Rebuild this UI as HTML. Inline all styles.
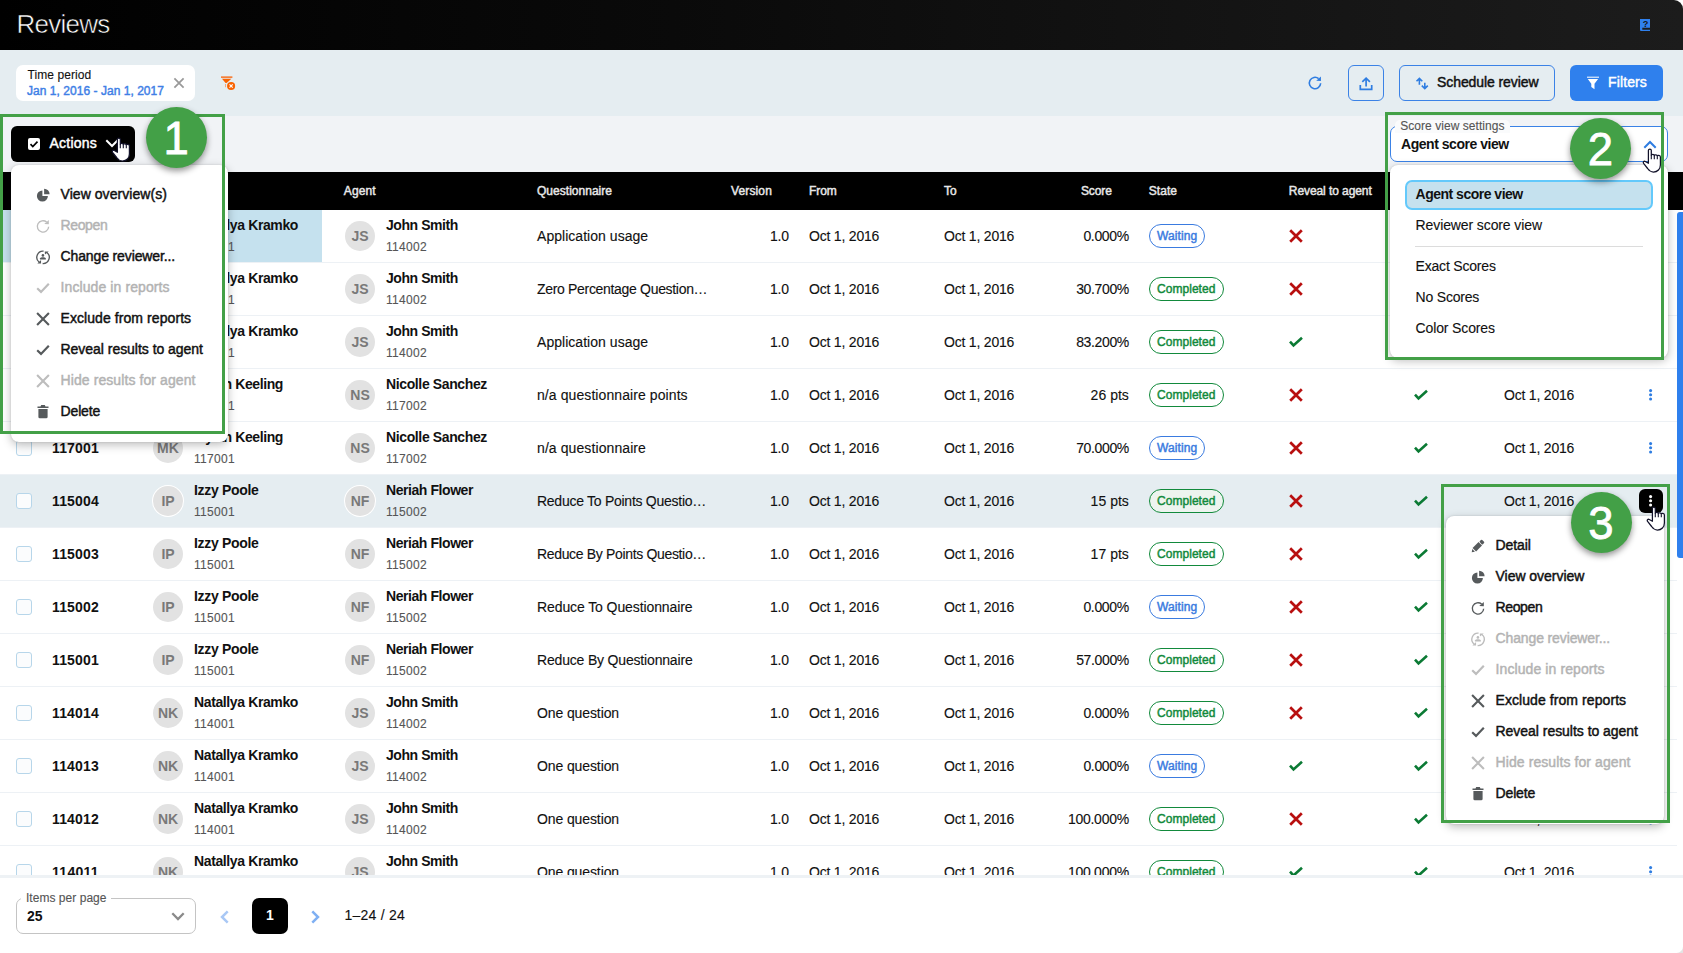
<!DOCTYPE html>
<html lang="en"><head><meta charset="utf-8"><title>Reviews</title>
<style>
*{box-sizing:border-box}
html,body{margin:0;padding:0}
body{width:1683px;height:953px;position:relative;overflow:hidden;background:#fff;font-family:"Liberation Sans",sans-serif;font-size:14px;color:#111}
.abs,.t,.header,.fbar,.tbar,.thead,.tbody,.foot,.row,.row>div,.row>span{position:absolute}
.t{white-space:nowrap;color:#111}
.t.m{-webkit-text-stroke:0.450px currentColor}
.t.r{-webkit-text-stroke:0.120px currentColor}
.header{left:0;top:0;width:1683px;height:50px;background:linear-gradient(90deg,#000 0%,#0a0a0a 40%,#1c1c1c 100%);border-top-right-radius:9px}
.fbar{left:0;top:50px;width:1683px;height:66px;background:#e5edf1}
.tbar{left:0;top:116px;width:1683px;height:56px;background:#f1f3f6}
.thead{left:0;top:172px;width:1683px;height:38px;background:#000}
.tbody{left:0;top:210px;width:1683px;height:665px;overflow:hidden;background:#fff}
.row{left:0;width:1677px;height:53px;border-bottom:1px solid #edf1f5}
.row.hov{background:#e5edf1}
.selcell{left:0;top:0;width:322px;height:52px;background:#c5e1ee}
.cb{left:16px;top:18px;width:16px;height:16px;border:1px solid #b7d6ea;border-radius:3px;background:#fbfcfd}
.av{top:11px;width:30px;height:30px;border-radius:50%;background:#e2e2e2;color:#797979;font-weight:bold;font-size:14px;text-align:center;line-height:30px;letter-spacing:0}
.row.hov .av{box-shadow:0 0 0 1px #fff}
.st{left:1149px;top:14px;height:24px;border:1px solid;border-radius:12px}
.st.w{border-color:#3a7be0;background:#fff}
.st.c{border-color:#128a3c;background:#fff}
.row.hov .st.c{background:#edf4ef}
.dotbtn{left:1639px;top:14px;width:24px;height:24px;background:#000;border-radius:6px}
.foot{left:0;top:875px;width:1683px;height:78px;background:#fff;border-top:3px solid #eef2f5}
.menu{position:absolute;background:#fff;border-radius:8px;box-shadow:0 3px 10px rgba(0,0,0,.26),0 0 2px rgba(0,0,0,.14)}
.grect{position:absolute;border:3px solid #43a047}
.gcirc{position:absolute;width:61px;height:61px;border-radius:50%;background:#43a047;color:#fff;font-size:45.500px;line-height:63px;text-align:center;box-shadow:0 3px 6px rgba(0,0,0,.42);-webkit-text-stroke:0.800px #fff}
.btn{position:absolute;height:36px;border-radius:6px;top:15px}
</style></head><body>
<div class="header"><span class="t r" style="left:16.5px;top:9px;font-size:26px;line-height:30px;letter-spacing:-0.75px;color:#fff;-webkit-text-stroke:0.550px #020202;">Reviews</span>
<svg class="abs" style="left:1639.800px;top:18.900px;width:10.500px;height:12.300px" viewBox="0 0 10.500 12.300"><path d="M0 0h10.500v8.800H2.300v1.900h8.200v1.600H1.800A1.800 1.800 0 0 1 0 10.500z" fill="#2f80ed"/><text x="5.600" y="7.800" font-size="9.200" font-weight="bold" text-anchor="middle" fill="#15171a" font-family="Liberation Sans, sans-serif">?</text></svg>
</div>
<div class="fbar">
 <div class="abs" style="left:16px;top:15px;width:179px;height:36px;background:#fff;border-radius:7px"></div>
 <span class="t r" style="left:27.5px;top:17px;font-size:12px;line-height:16px;letter-spacing:0.071px;">Time period</span>
 <span class="t m" style="left:27px;top:33px;font-size:12px;line-height:16px;letter-spacing:0.036px;color:#3f7fe6;">Jan 1, 2016 - Jan 1, 2017</span>
 <svg class="abs" style="left:178.90px;top:33.00px;width:1px;height:1px;overflow:visible"><path d="M-4.600 -4.600L4.600 4.600M4.600 -4.600L-4.600 4.600" stroke="#999" stroke-width="1.750" fill="none"/></svg>
 <svg class="abs" style="left:0.00px;top:0.00px;width:1px;height:1px;overflow:visible"><path d="M221 26.300H232.400V28H221z" fill="#f5803a"/><path d="M222 28.850H231.400L226.600 32.900H225.600z" fill="#f96302"/><path d="M225 34H225.900V37.200H225z" fill="#f9a06a"/><circle cx="231.100" cy="35.950" r="4.050" fill="#f96302"/><path d="M229.500 34.350L232.700 37.550M232.700 34.350L229.500 37.550" stroke="#fff" stroke-width="1.150" fill="none"/></svg>
 <svg class="abs" style="left:1315.00px;top:33.00px;width:1px;height:1px;overflow:visible"><path d="M5.660 0.300A5.670 5.670 0 1 1 3.640 -4.340" fill="none" stroke="#2f7de1" stroke-width="1.600"/><path fill="#2f7de1" d="M5.950 -6.450V-1.950L1.200 -2.300z"/></svg>
 <div class="btn" style="left:1348px;width:36px;border:1px solid #3b82e6"><svg class="abs" style="left:-1349.00px;top:-65.00px;width:1px;height:1px;overflow:visible"><path d="M1366.100 85.400V77.300M1362.300 80.900L1366.100 77.100L1369.900 80.900M1360.300 84.100V88.300H1371.700V84.100" fill="none" stroke="#2f7de1" stroke-width="1.700"/></svg></div>
 <div class="btn" style="left:1399px;width:156px;border:1px solid #3b82e6"><svg class="abs" style="left:-1400.00px;top:-65.00px;width:1px;height:1px;overflow:visible"><path d="M1419.400 83.700V77.600M1416.500 80.300L1419.400 77.400L1422.300 80.300M1424.800 81.800V87.300M1421.800 84.600L1424.800 87.600L1427.800 84.600" fill="none" stroke="#2f7de1" stroke-width="1.600"/></svg></div>
 <span class="t m" style="left:1437px;top:23px;font-size:14px;line-height:18px;letter-spacing:-0.082px;">Schedule review</span>
 <div class="btn" style="left:1570px;width:93px;background:#2f80ed"><svg class="abs" style="left:-1570.00px;top:-65.00px;width:1px;height:1px;overflow:visible"><path d="M1587 76.600H1599V77.900H1587z" fill="#d5e5fb"/><path d="M1587.800 78.900H1598.100L1594.500 83.700V89.200L1591.300 87.100V83.700z" fill="#fff"/></svg></div>
 <span class="t m" style="left:1608px;top:23px;font-size:14px;line-height:18px;letter-spacing:0.125px;color:#fff;">Filters</span>
</div>
<div class="tbar">
 <div class="abs" style="left:11px;top:10px;width:124px;height:36px;background:#000;border-radius:6px"></div>
 <svg class="abs" style="left:28px;top:22px;width:12px;height:12px" viewBox="0 0 12 12"><rect width="12" height="12" rx="2" fill="#fff"/><path d="M2.500 6.200l2.300 2.300 4.700-4.900" fill="none" stroke="#000" stroke-width="1.700"/></svg>
 <span class="t m" style="left:49.4px;top:18px;font-size:14px;line-height:18px;letter-spacing:0.254px;color:#fff;">Actions</span>
 <svg class="abs" style="left:105px;top:23px;width:14px;height:9px" viewBox="0 0 14 9"><path d="M1.300 1.300L7 7L12.700 1.300" fill="none" stroke="#fff" stroke-width="2"/></svg>
 <div class="abs" style="left:1390px;top:10px;width:278px;height:36px;background:#fff;border:1px solid #3b82e6;border-radius:7px"></div>
 <div class="abs" style="left:1395px;top:4px;width:115px;height:13px;background:#fafbfc;border-radius:5px 5px 0 0"></div>
 <span class="t r" style="left:1400.2px;top:1.5px;font-size:12px;line-height:16px;letter-spacing:0.048px;color:#555;">Score view settings</span>
 <span class="t" style="left:1401px;top:19px;font-size:14px;line-height:18px;letter-spacing:-0.466px;font-weight:bold;">Agent score view</span>
 <svg class="abs" style="left:1643px;top:23.500px;width:14px;height:9px" viewBox="0 0 14 9"><path d="M1.300 7.700L7 2L12.700 7.700" fill="none" stroke="#2f7de1" stroke-width="2"/></svg>
</div>
<div class="thead"><span class="t m" style="left:343.8px;top:11px;font-size:12px;line-height:16px;letter-spacing:0.108px;color:#e8e8e8;">Agent</span><span class="t m" style="left:537px;top:11px;font-size:12px;line-height:16px;letter-spacing:0.022px;color:#e8e8e8;">Questionnaire</span><span class="t m" style="left:731px;top:11px;font-size:12px;line-height:16px;letter-spacing:0.138px;color:#e8e8e8;">Version</span><span class="t m" style="left:809px;top:11px;font-size:12px;line-height:16px;letter-spacing:-0.1px;color:#e8e8e8;">From</span><span class="t m" style="left:944px;top:11px;font-size:12px;line-height:16px;letter-spacing:-0.044px;color:#e8e8e8;">To</span><span class="t m" style="left:1081px;top:11px;font-size:12px;line-height:16px;letter-spacing:-0.132px;color:#e8e8e8;">Score</span><span class="t m" style="left:1148.8px;top:11px;font-size:12px;line-height:16px;letter-spacing:0.034px;color:#e8e8e8;">State</span><span class="t m" style="left:1288.8px;top:11px;font-size:12px;line-height:16px;letter-spacing:-0.077px;color:#e8e8e8;">Reveal to agent</span></div>
<div class="tbody">
<div class="row" style="top:0px"><div class="selcell"></div><div class="cb"></div><span class="t" style="left:52px;top:17px;font-size:14px;line-height:18px;letter-spacing:0.158px;font-weight:bold;">114017</span>
<div class="av" style="left:153px">NK</div><span class="t" style="left:194px;top:6px;font-size:14px;line-height:18px;letter-spacing:-0.381px;font-weight:bold;">Natallya Kramko</span><span class="t r" style="left:194px;top:28.5px;font-size:12px;line-height:16px;letter-spacing:0.291px;color:#555;">114001</span>
<div class="av" style="left:345px">JS</div><span class="t" style="left:386px;top:6px;font-size:14px;line-height:18px;letter-spacing:-0.433px;font-weight:bold;">John Smith</span><span class="t r" style="left:386px;top:28.5px;font-size:12px;line-height:16px;letter-spacing:0.291px;color:#555;">114002</span>
<span class="t r" style="left:537px;top:17px;font-size:14px;line-height:18px;letter-spacing:0.039px;">Application usage</span><span class="t r" style="left:770px;top:17px;font-size:14px;line-height:18px;letter-spacing:-0.256px;">1.0</span><span class="t r" style="left:809px;top:17px;font-size:14px;line-height:18px;letter-spacing:-0.199px;">Oct 1, 2016</span><span class="t r" style="left:944px;top:17px;font-size:14px;line-height:18px;letter-spacing:-0.199px;">Oct 1, 2016</span>
<span class="t r" style="left:1083.4px;top:17px;font-size:14px;line-height:18px;letter-spacing:-0.331px;">0.000%</span><span class="st w" style="width:56px"><span class="t m" style="left:7px;top:3px;font-size:12px;line-height:16px;letter-spacing:0.103px;color:#3a7be0;">Waiting</span></span><svg class="abs" style="left:1296.00px;top:26.20px;width:1px;height:1px;overflow:visible"><path d="M-5.800 -5.800L5.800 5.800M5.800 -5.800L-5.800 5.800" fill="none" stroke="#b80f0f" stroke-width="2.700"/></svg><svg class="abs" style="left:1421.00px;top:26.00px;width:1px;height:1px;overflow:visible"><path d="M-6 -0.300L-2.500 3.500L6 -4.200" fill="none" stroke="#0b7a34" stroke-width="2.600"/></svg><span class="t r" style="left:1504px;top:17px;font-size:14px;line-height:18px;letter-spacing:-0.199px;">Oct 1, 2016</span><svg class="abs" style="left:1649.4px;top:20.2px;width:3.200px;height:11.600px" viewBox="0 0 3.200 11.600" fill="#2f7de1"><circle cx="1.600" cy="1.600" r="1.550"/><circle cx="1.600" cy="5.800" r="1.550"/><circle cx="1.600" cy="10" r="1.550"/></svg></div>
<div class="row" style="top:53px"><div class="cb"></div><span class="t" style="left:52px;top:17px;font-size:14px;line-height:18px;letter-spacing:0.158px;font-weight:bold;">114016</span>
<div class="av" style="left:153px">NK</div><span class="t" style="left:194px;top:6px;font-size:14px;line-height:18px;letter-spacing:-0.381px;font-weight:bold;">Natallya Kramko</span><span class="t r" style="left:194px;top:28.5px;font-size:12px;line-height:16px;letter-spacing:0.291px;color:#555;">114001</span>
<div class="av" style="left:345px">JS</div><span class="t" style="left:386px;top:6px;font-size:14px;line-height:18px;letter-spacing:-0.433px;font-weight:bold;">John Smith</span><span class="t r" style="left:386px;top:28.5px;font-size:12px;line-height:16px;letter-spacing:0.291px;color:#555;">114002</span>
<span class="t r" style="left:537px;top:17px;font-size:14px;line-height:18px;letter-spacing:-0.317px;">Zero Percentage Question…</span><span class="t r" style="left:770px;top:17px;font-size:14px;line-height:18px;letter-spacing:-0.256px;">1.0</span><span class="t r" style="left:809px;top:17px;font-size:14px;line-height:18px;letter-spacing:-0.199px;">Oct 1, 2016</span><span class="t r" style="left:944px;top:17px;font-size:14px;line-height:18px;letter-spacing:-0.199px;">Oct 1, 2016</span>
<span class="t r" style="left:1076.2px;top:17px;font-size:14px;line-height:18px;letter-spacing:-0.369px;">30.700%</span><span class="st c" style="width:75px"><span class="t m" style="left:7px;top:3px;font-size:12px;line-height:16px;letter-spacing:0.041px;color:#128a3c;">Completed</span></span><svg class="abs" style="left:1296.00px;top:26.20px;width:1px;height:1px;overflow:visible"><path d="M-5.800 -5.800L5.800 5.800M5.800 -5.800L-5.800 5.800" fill="none" stroke="#b80f0f" stroke-width="2.700"/></svg><svg class="abs" style="left:1421.00px;top:26.00px;width:1px;height:1px;overflow:visible"><path d="M-6 -0.300L-2.500 3.500L6 -4.200" fill="none" stroke="#0b7a34" stroke-width="2.600"/></svg><span class="t r" style="left:1504px;top:17px;font-size:14px;line-height:18px;letter-spacing:-0.199px;">Oct 1, 2016</span><svg class="abs" style="left:1649.4px;top:20.2px;width:3.200px;height:11.600px" viewBox="0 0 3.200 11.600" fill="#2f7de1"><circle cx="1.600" cy="1.600" r="1.550"/><circle cx="1.600" cy="5.800" r="1.550"/><circle cx="1.600" cy="10" r="1.550"/></svg></div>
<div class="row" style="top:106px"><div class="cb"></div><span class="t" style="left:52px;top:17px;font-size:14px;line-height:18px;letter-spacing:0.158px;font-weight:bold;">114015</span>
<div class="av" style="left:153px">NK</div><span class="t" style="left:194px;top:6px;font-size:14px;line-height:18px;letter-spacing:-0.381px;font-weight:bold;">Natallya Kramko</span><span class="t r" style="left:194px;top:28.5px;font-size:12px;line-height:16px;letter-spacing:0.291px;color:#555;">114001</span>
<div class="av" style="left:345px">JS</div><span class="t" style="left:386px;top:6px;font-size:14px;line-height:18px;letter-spacing:-0.433px;font-weight:bold;">John Smith</span><span class="t r" style="left:386px;top:28.5px;font-size:12px;line-height:16px;letter-spacing:0.291px;color:#555;">114002</span>
<span class="t r" style="left:537px;top:17px;font-size:14px;line-height:18px;letter-spacing:0.039px;">Application usage</span><span class="t r" style="left:770px;top:17px;font-size:14px;line-height:18px;letter-spacing:-0.256px;">1.0</span><span class="t r" style="left:809px;top:17px;font-size:14px;line-height:18px;letter-spacing:-0.199px;">Oct 1, 2016</span><span class="t r" style="left:944px;top:17px;font-size:14px;line-height:18px;letter-spacing:-0.199px;">Oct 1, 2016</span>
<span class="t r" style="left:1076.2px;top:17px;font-size:14px;line-height:18px;letter-spacing:-0.369px;">83.200%</span><span class="st c" style="width:75px"><span class="t m" style="left:7px;top:3px;font-size:12px;line-height:16px;letter-spacing:0.041px;color:#128a3c;">Completed</span></span><svg class="abs" style="left:1296.00px;top:26.00px;width:1px;height:1px;overflow:visible"><path d="M-6 -0.300L-2.500 3.500L6 -4.200" fill="none" stroke="#0b7a34" stroke-width="2.600"/></svg><svg class="abs" style="left:1421.00px;top:26.00px;width:1px;height:1px;overflow:visible"><path d="M-6 -0.300L-2.500 3.500L6 -4.200" fill="none" stroke="#0b7a34" stroke-width="2.600"/></svg><span class="t r" style="left:1504px;top:17px;font-size:14px;line-height:18px;letter-spacing:-0.199px;">Oct 1, 2016</span><svg class="abs" style="left:1649.4px;top:20.2px;width:3.200px;height:11.600px" viewBox="0 0 3.200 11.600" fill="#2f7de1"><circle cx="1.600" cy="1.600" r="1.550"/><circle cx="1.600" cy="5.800" r="1.550"/><circle cx="1.600" cy="10" r="1.550"/></svg></div>
<div class="row" style="top:159px"><div class="cb"></div><span class="t" style="left:52px;top:17px;font-size:14px;line-height:18px;letter-spacing:0.158px;font-weight:bold;">117002</span>
<div class="av" style="left:153px">MK</div><span class="t" style="left:194px;top:6px;font-size:14px;line-height:18px;letter-spacing:-0.395px;font-weight:bold;">Mylan Keeling</span><span class="t r" style="left:194px;top:28.5px;font-size:12px;line-height:16px;letter-spacing:0.291px;color:#555;">117001</span>
<div class="av" style="left:345px">NS</div><span class="t" style="left:386px;top:6px;font-size:14px;line-height:18px;letter-spacing:-0.373px;font-weight:bold;">Nicolle Sanchez</span><span class="t r" style="left:386px;top:28.5px;font-size:12px;line-height:16px;letter-spacing:0.291px;color:#555;">117002</span>
<span class="t r" style="left:537px;top:17px;font-size:14px;line-height:18px;letter-spacing:0.085px;">n/a questionnaire points</span><span class="t r" style="left:770px;top:17px;font-size:14px;line-height:18px;letter-spacing:-0.256px;">1.0</span><span class="t r" style="left:809px;top:17px;font-size:14px;line-height:18px;letter-spacing:-0.199px;">Oct 1, 2016</span><span class="t r" style="left:944px;top:17px;font-size:14px;line-height:18px;letter-spacing:-0.199px;">Oct 1, 2016</span>
<span class="t r" style="left:1090.6px;top:17px;font-size:14px;line-height:18px;letter-spacing:0.027px;">26 pts</span><span class="st c" style="width:75px"><span class="t m" style="left:7px;top:3px;font-size:12px;line-height:16px;letter-spacing:0.041px;color:#128a3c;">Completed</span></span><svg class="abs" style="left:1296.00px;top:26.20px;width:1px;height:1px;overflow:visible"><path d="M-5.800 -5.800L5.800 5.800M5.800 -5.800L-5.800 5.800" fill="none" stroke="#b80f0f" stroke-width="2.700"/></svg><svg class="abs" style="left:1421.00px;top:26.00px;width:1px;height:1px;overflow:visible"><path d="M-6 -0.300L-2.500 3.500L6 -4.200" fill="none" stroke="#0b7a34" stroke-width="2.600"/></svg><span class="t r" style="left:1504px;top:17px;font-size:14px;line-height:18px;letter-spacing:-0.199px;">Oct 1, 2016</span><svg class="abs" style="left:1649.4px;top:20.2px;width:3.200px;height:11.600px" viewBox="0 0 3.200 11.600" fill="#2f7de1"><circle cx="1.600" cy="1.600" r="1.550"/><circle cx="1.600" cy="5.800" r="1.550"/><circle cx="1.600" cy="10" r="1.550"/></svg></div>
<div class="row" style="top:212px"><div class="cb"></div><span class="t" style="left:52px;top:17px;font-size:14px;line-height:18px;letter-spacing:0.158px;font-weight:bold;">117001</span>
<div class="av" style="left:153px">MK</div><span class="t" style="left:194px;top:6px;font-size:14px;line-height:18px;letter-spacing:-0.395px;font-weight:bold;">Mylan Keeling</span><span class="t r" style="left:194px;top:28.5px;font-size:12px;line-height:16px;letter-spacing:0.291px;color:#555;">117001</span>
<div class="av" style="left:345px">NS</div><span class="t" style="left:386px;top:6px;font-size:14px;line-height:18px;letter-spacing:-0.373px;font-weight:bold;">Nicolle Sanchez</span><span class="t r" style="left:386px;top:28.5px;font-size:12px;line-height:16px;letter-spacing:0.291px;color:#555;">117002</span>
<span class="t r" style="left:537px;top:17px;font-size:14px;line-height:18px;letter-spacing:0.093px;">n/a questionnaire</span><span class="t r" style="left:770px;top:17px;font-size:14px;line-height:18px;letter-spacing:-0.256px;">1.0</span><span class="t r" style="left:809px;top:17px;font-size:14px;line-height:18px;letter-spacing:-0.199px;">Oct 1, 2016</span><span class="t r" style="left:944px;top:17px;font-size:14px;line-height:18px;letter-spacing:-0.199px;">Oct 1, 2016</span>
<span class="t r" style="left:1076.2px;top:17px;font-size:14px;line-height:18px;letter-spacing:-0.369px;">70.000%</span><span class="st w" style="width:56px"><span class="t m" style="left:7px;top:3px;font-size:12px;line-height:16px;letter-spacing:0.103px;color:#3a7be0;">Waiting</span></span><svg class="abs" style="left:1296.00px;top:26.20px;width:1px;height:1px;overflow:visible"><path d="M-5.800 -5.800L5.800 5.800M5.800 -5.800L-5.800 5.800" fill="none" stroke="#b80f0f" stroke-width="2.700"/></svg><svg class="abs" style="left:1421.00px;top:26.00px;width:1px;height:1px;overflow:visible"><path d="M-6 -0.300L-2.500 3.500L6 -4.200" fill="none" stroke="#0b7a34" stroke-width="2.600"/></svg><span class="t r" style="left:1504px;top:17px;font-size:14px;line-height:18px;letter-spacing:-0.199px;">Oct 1, 2016</span><svg class="abs" style="left:1649.4px;top:20.2px;width:3.200px;height:11.600px" viewBox="0 0 3.200 11.600" fill="#2f7de1"><circle cx="1.600" cy="1.600" r="1.550"/><circle cx="1.600" cy="5.800" r="1.550"/><circle cx="1.600" cy="10" r="1.550"/></svg></div>
<div class="row hov" style="top:265px"><div class="cb"></div><span class="t" style="left:52px;top:17px;font-size:14px;line-height:18px;letter-spacing:0.158px;font-weight:bold;">115004</span>
<div class="av" style="left:153px">IP</div><span class="t" style="left:194px;top:6px;font-size:14px;line-height:18px;letter-spacing:-0.319px;font-weight:bold;">Izzy Poole</span><span class="t r" style="left:194px;top:28.5px;font-size:12px;line-height:16px;letter-spacing:0.291px;color:#555;">115001</span>
<div class="av" style="left:345px">NF</div><span class="t" style="left:386px;top:6px;font-size:14px;line-height:18px;letter-spacing:-0.43px;font-weight:bold;">Neriah Flower</span><span class="t r" style="left:386px;top:28.5px;font-size:12px;line-height:16px;letter-spacing:0.291px;color:#555;">115002</span>
<span class="t r" style="left:537px;top:17px;font-size:14px;line-height:18px;letter-spacing:-0.265px;">Reduce To Points Questio…</span><span class="t r" style="left:770px;top:17px;font-size:14px;line-height:18px;letter-spacing:-0.256px;">1.0</span><span class="t r" style="left:809px;top:17px;font-size:14px;line-height:18px;letter-spacing:-0.199px;">Oct 1, 2016</span><span class="t r" style="left:944px;top:17px;font-size:14px;line-height:18px;letter-spacing:-0.199px;">Oct 1, 2016</span>
<span class="t r" style="left:1090.6px;top:17px;font-size:14px;line-height:18px;letter-spacing:0.027px;">15 pts</span><span class="st c" style="width:75px"><span class="t m" style="left:7px;top:3px;font-size:12px;line-height:16px;letter-spacing:0.041px;color:#128a3c;">Completed</span></span><svg class="abs" style="left:1296.00px;top:26.20px;width:1px;height:1px;overflow:visible"><path d="M-5.800 -5.800L5.800 5.800M5.800 -5.800L-5.800 5.800" fill="none" stroke="#b80f0f" stroke-width="2.700"/></svg><svg class="abs" style="left:1421.00px;top:26.00px;width:1px;height:1px;overflow:visible"><path d="M-6 -0.300L-2.500 3.500L6 -4.200" fill="none" stroke="#0b7a34" stroke-width="2.600"/></svg><span class="t r" style="left:1504px;top:17px;font-size:14px;line-height:18px;letter-spacing:-0.199px;">Oct 1, 2016</span><div class="dotbtn"><svg class="abs" style="left:10.4px;top:6.2px;width:3.200px;height:11.600px" viewBox="0 0 3.200 11.600" fill="#fff"><circle cx="1.600" cy="1.600" r="1.550"/><circle cx="1.600" cy="5.800" r="1.550"/><circle cx="1.600" cy="10" r="1.550"/></svg></div></div>
<div class="row" style="top:318px"><div class="cb"></div><span class="t" style="left:52px;top:17px;font-size:14px;line-height:18px;letter-spacing:0.158px;font-weight:bold;">115003</span>
<div class="av" style="left:153px">IP</div><span class="t" style="left:194px;top:6px;font-size:14px;line-height:18px;letter-spacing:-0.319px;font-weight:bold;">Izzy Poole</span><span class="t r" style="left:194px;top:28.5px;font-size:12px;line-height:16px;letter-spacing:0.291px;color:#555;">115001</span>
<div class="av" style="left:345px">NF</div><span class="t" style="left:386px;top:6px;font-size:14px;line-height:18px;letter-spacing:-0.43px;font-weight:bold;">Neriah Flower</span><span class="t r" style="left:386px;top:28.5px;font-size:12px;line-height:16px;letter-spacing:0.291px;color:#555;">115002</span>
<span class="t r" style="left:537px;top:17px;font-size:14px;line-height:18px;letter-spacing:-0.337px;">Reduce By Points Questio…</span><span class="t r" style="left:770px;top:17px;font-size:14px;line-height:18px;letter-spacing:-0.256px;">1.0</span><span class="t r" style="left:809px;top:17px;font-size:14px;line-height:18px;letter-spacing:-0.199px;">Oct 1, 2016</span><span class="t r" style="left:944px;top:17px;font-size:14px;line-height:18px;letter-spacing:-0.199px;">Oct 1, 2016</span>
<span class="t r" style="left:1090.6px;top:17px;font-size:14px;line-height:18px;letter-spacing:0.027px;">17 pts</span><span class="st c" style="width:75px"><span class="t m" style="left:7px;top:3px;font-size:12px;line-height:16px;letter-spacing:0.041px;color:#128a3c;">Completed</span></span><svg class="abs" style="left:1296.00px;top:26.20px;width:1px;height:1px;overflow:visible"><path d="M-5.800 -5.800L5.800 5.800M5.800 -5.800L-5.800 5.800" fill="none" stroke="#b80f0f" stroke-width="2.700"/></svg><svg class="abs" style="left:1421.00px;top:26.00px;width:1px;height:1px;overflow:visible"><path d="M-6 -0.300L-2.500 3.500L6 -4.200" fill="none" stroke="#0b7a34" stroke-width="2.600"/></svg><span class="t r" style="left:1504px;top:17px;font-size:14px;line-height:18px;letter-spacing:-0.199px;">Oct 1, 2016</span><svg class="abs" style="left:1649.4px;top:20.2px;width:3.200px;height:11.600px" viewBox="0 0 3.200 11.600" fill="#2f7de1"><circle cx="1.600" cy="1.600" r="1.550"/><circle cx="1.600" cy="5.800" r="1.550"/><circle cx="1.600" cy="10" r="1.550"/></svg></div>
<div class="row" style="top:371px"><div class="cb"></div><span class="t" style="left:52px;top:17px;font-size:14px;line-height:18px;letter-spacing:0.158px;font-weight:bold;">115002</span>
<div class="av" style="left:153px">IP</div><span class="t" style="left:194px;top:6px;font-size:14px;line-height:18px;letter-spacing:-0.319px;font-weight:bold;">Izzy Poole</span><span class="t r" style="left:194px;top:28.5px;font-size:12px;line-height:16px;letter-spacing:0.291px;color:#555;">115001</span>
<div class="av" style="left:345px">NF</div><span class="t" style="left:386px;top:6px;font-size:14px;line-height:18px;letter-spacing:-0.43px;font-weight:bold;">Neriah Flower</span><span class="t r" style="left:386px;top:28.5px;font-size:12px;line-height:16px;letter-spacing:0.291px;color:#555;">115002</span>
<span class="t r" style="left:537px;top:17px;font-size:14px;line-height:18px;letter-spacing:-0.097px;">Reduce To Questionnaire</span><span class="t r" style="left:770px;top:17px;font-size:14px;line-height:18px;letter-spacing:-0.256px;">1.0</span><span class="t r" style="left:809px;top:17px;font-size:14px;line-height:18px;letter-spacing:-0.199px;">Oct 1, 2016</span><span class="t r" style="left:944px;top:17px;font-size:14px;line-height:18px;letter-spacing:-0.199px;">Oct 1, 2016</span>
<span class="t r" style="left:1083.4px;top:17px;font-size:14px;line-height:18px;letter-spacing:-0.331px;">0.000%</span><span class="st w" style="width:56px"><span class="t m" style="left:7px;top:3px;font-size:12px;line-height:16px;letter-spacing:0.103px;color:#3a7be0;">Waiting</span></span><svg class="abs" style="left:1296.00px;top:26.20px;width:1px;height:1px;overflow:visible"><path d="M-5.800 -5.800L5.800 5.800M5.800 -5.800L-5.800 5.800" fill="none" stroke="#b80f0f" stroke-width="2.700"/></svg><svg class="abs" style="left:1421.00px;top:26.00px;width:1px;height:1px;overflow:visible"><path d="M-6 -0.300L-2.500 3.500L6 -4.200" fill="none" stroke="#0b7a34" stroke-width="2.600"/></svg><span class="t r" style="left:1504px;top:17px;font-size:14px;line-height:18px;letter-spacing:-0.199px;">Oct 1, 2016</span><svg class="abs" style="left:1649.4px;top:20.2px;width:3.200px;height:11.600px" viewBox="0 0 3.200 11.600" fill="#2f7de1"><circle cx="1.600" cy="1.600" r="1.550"/><circle cx="1.600" cy="5.800" r="1.550"/><circle cx="1.600" cy="10" r="1.550"/></svg></div>
<div class="row" style="top:424px"><div class="cb"></div><span class="t" style="left:52px;top:17px;font-size:14px;line-height:18px;letter-spacing:0.158px;font-weight:bold;">115001</span>
<div class="av" style="left:153px">IP</div><span class="t" style="left:194px;top:6px;font-size:14px;line-height:18px;letter-spacing:-0.319px;font-weight:bold;">Izzy Poole</span><span class="t r" style="left:194px;top:28.5px;font-size:12px;line-height:16px;letter-spacing:0.291px;color:#555;">115001</span>
<div class="av" style="left:345px">NF</div><span class="t" style="left:386px;top:6px;font-size:14px;line-height:18px;letter-spacing:-0.43px;font-weight:bold;">Neriah Flower</span><span class="t r" style="left:386px;top:28.5px;font-size:12px;line-height:16px;letter-spacing:0.291px;color:#555;">115002</span>
<span class="t r" style="left:537px;top:17px;font-size:14px;line-height:18px;letter-spacing:-0.176px;">Reduce By Questionnaire</span><span class="t r" style="left:770px;top:17px;font-size:14px;line-height:18px;letter-spacing:-0.256px;">1.0</span><span class="t r" style="left:809px;top:17px;font-size:14px;line-height:18px;letter-spacing:-0.199px;">Oct 1, 2016</span><span class="t r" style="left:944px;top:17px;font-size:14px;line-height:18px;letter-spacing:-0.199px;">Oct 1, 2016</span>
<span class="t r" style="left:1076.2px;top:17px;font-size:14px;line-height:18px;letter-spacing:-0.369px;">57.000%</span><span class="st c" style="width:75px"><span class="t m" style="left:7px;top:3px;font-size:12px;line-height:16px;letter-spacing:0.041px;color:#128a3c;">Completed</span></span><svg class="abs" style="left:1296.00px;top:26.20px;width:1px;height:1px;overflow:visible"><path d="M-5.800 -5.800L5.800 5.800M5.800 -5.800L-5.800 5.800" fill="none" stroke="#b80f0f" stroke-width="2.700"/></svg><svg class="abs" style="left:1421.00px;top:26.00px;width:1px;height:1px;overflow:visible"><path d="M-6 -0.300L-2.500 3.500L6 -4.200" fill="none" stroke="#0b7a34" stroke-width="2.600"/></svg><span class="t r" style="left:1504px;top:17px;font-size:14px;line-height:18px;letter-spacing:-0.199px;">Oct 1, 2016</span><svg class="abs" style="left:1649.4px;top:20.2px;width:3.200px;height:11.600px" viewBox="0 0 3.200 11.600" fill="#2f7de1"><circle cx="1.600" cy="1.600" r="1.550"/><circle cx="1.600" cy="5.800" r="1.550"/><circle cx="1.600" cy="10" r="1.550"/></svg></div>
<div class="row" style="top:477px"><div class="cb"></div><span class="t" style="left:52px;top:17px;font-size:14px;line-height:18px;letter-spacing:0.158px;font-weight:bold;">114014</span>
<div class="av" style="left:153px">NK</div><span class="t" style="left:194px;top:6px;font-size:14px;line-height:18px;letter-spacing:-0.381px;font-weight:bold;">Natallya Kramko</span><span class="t r" style="left:194px;top:28.5px;font-size:12px;line-height:16px;letter-spacing:0.291px;color:#555;">114001</span>
<div class="av" style="left:345px">JS</div><span class="t" style="left:386px;top:6px;font-size:14px;line-height:18px;letter-spacing:-0.433px;font-weight:bold;">John Smith</span><span class="t r" style="left:386px;top:28.5px;font-size:12px;line-height:16px;letter-spacing:0.291px;color:#555;">114002</span>
<span class="t r" style="left:537px;top:17px;font-size:14px;line-height:18px;letter-spacing:-0.108px;">One question</span><span class="t r" style="left:770px;top:17px;font-size:14px;line-height:18px;letter-spacing:-0.256px;">1.0</span><span class="t r" style="left:809px;top:17px;font-size:14px;line-height:18px;letter-spacing:-0.199px;">Oct 1, 2016</span><span class="t r" style="left:944px;top:17px;font-size:14px;line-height:18px;letter-spacing:-0.199px;">Oct 1, 2016</span>
<span class="t r" style="left:1083.4px;top:17px;font-size:14px;line-height:18px;letter-spacing:-0.331px;">0.000%</span><span class="st c" style="width:75px"><span class="t m" style="left:7px;top:3px;font-size:12px;line-height:16px;letter-spacing:0.041px;color:#128a3c;">Completed</span></span><svg class="abs" style="left:1296.00px;top:26.20px;width:1px;height:1px;overflow:visible"><path d="M-5.800 -5.800L5.800 5.800M5.800 -5.800L-5.800 5.800" fill="none" stroke="#b80f0f" stroke-width="2.700"/></svg><svg class="abs" style="left:1421.00px;top:26.00px;width:1px;height:1px;overflow:visible"><path d="M-6 -0.300L-2.500 3.500L6 -4.200" fill="none" stroke="#0b7a34" stroke-width="2.600"/></svg><span class="t r" style="left:1504px;top:17px;font-size:14px;line-height:18px;letter-spacing:-0.199px;">Oct 1, 2016</span><svg class="abs" style="left:1649.4px;top:20.2px;width:3.200px;height:11.600px" viewBox="0 0 3.200 11.600" fill="#2f7de1"><circle cx="1.600" cy="1.600" r="1.550"/><circle cx="1.600" cy="5.800" r="1.550"/><circle cx="1.600" cy="10" r="1.550"/></svg></div>
<div class="row" style="top:530px"><div class="cb"></div><span class="t" style="left:52px;top:17px;font-size:14px;line-height:18px;letter-spacing:0.158px;font-weight:bold;">114013</span>
<div class="av" style="left:153px">NK</div><span class="t" style="left:194px;top:6px;font-size:14px;line-height:18px;letter-spacing:-0.381px;font-weight:bold;">Natallya Kramko</span><span class="t r" style="left:194px;top:28.5px;font-size:12px;line-height:16px;letter-spacing:0.291px;color:#555;">114001</span>
<div class="av" style="left:345px">JS</div><span class="t" style="left:386px;top:6px;font-size:14px;line-height:18px;letter-spacing:-0.433px;font-weight:bold;">John Smith</span><span class="t r" style="left:386px;top:28.5px;font-size:12px;line-height:16px;letter-spacing:0.291px;color:#555;">114002</span>
<span class="t r" style="left:537px;top:17px;font-size:14px;line-height:18px;letter-spacing:-0.108px;">One question</span><span class="t r" style="left:770px;top:17px;font-size:14px;line-height:18px;letter-spacing:-0.256px;">1.0</span><span class="t r" style="left:809px;top:17px;font-size:14px;line-height:18px;letter-spacing:-0.199px;">Oct 1, 2016</span><span class="t r" style="left:944px;top:17px;font-size:14px;line-height:18px;letter-spacing:-0.199px;">Oct 1, 2016</span>
<span class="t r" style="left:1083.4px;top:17px;font-size:14px;line-height:18px;letter-spacing:-0.331px;">0.000%</span><span class="st w" style="width:56px"><span class="t m" style="left:7px;top:3px;font-size:12px;line-height:16px;letter-spacing:0.103px;color:#3a7be0;">Waiting</span></span><svg class="abs" style="left:1296.00px;top:26.00px;width:1px;height:1px;overflow:visible"><path d="M-6 -0.300L-2.500 3.500L6 -4.200" fill="none" stroke="#0b7a34" stroke-width="2.600"/></svg><svg class="abs" style="left:1421.00px;top:26.00px;width:1px;height:1px;overflow:visible"><path d="M-6 -0.300L-2.500 3.500L6 -4.200" fill="none" stroke="#0b7a34" stroke-width="2.600"/></svg><span class="t r" style="left:1504px;top:17px;font-size:14px;line-height:18px;letter-spacing:-0.199px;">Oct 1, 2016</span><svg class="abs" style="left:1649.4px;top:20.2px;width:3.200px;height:11.600px" viewBox="0 0 3.200 11.600" fill="#2f7de1"><circle cx="1.600" cy="1.600" r="1.550"/><circle cx="1.600" cy="5.800" r="1.550"/><circle cx="1.600" cy="10" r="1.550"/></svg></div>
<div class="row" style="top:583px"><div class="cb"></div><span class="t" style="left:52px;top:17px;font-size:14px;line-height:18px;letter-spacing:0.158px;font-weight:bold;">114012</span>
<div class="av" style="left:153px">NK</div><span class="t" style="left:194px;top:6px;font-size:14px;line-height:18px;letter-spacing:-0.381px;font-weight:bold;">Natallya Kramko</span><span class="t r" style="left:194px;top:28.5px;font-size:12px;line-height:16px;letter-spacing:0.291px;color:#555;">114001</span>
<div class="av" style="left:345px">JS</div><span class="t" style="left:386px;top:6px;font-size:14px;line-height:18px;letter-spacing:-0.433px;font-weight:bold;">John Smith</span><span class="t r" style="left:386px;top:28.5px;font-size:12px;line-height:16px;letter-spacing:0.291px;color:#555;">114002</span>
<span class="t r" style="left:537px;top:17px;font-size:14px;line-height:18px;letter-spacing:-0.108px;">One question</span><span class="t r" style="left:770px;top:17px;font-size:14px;line-height:18px;letter-spacing:-0.256px;">1.0</span><span class="t r" style="left:809px;top:17px;font-size:14px;line-height:18px;letter-spacing:-0.199px;">Oct 1, 2016</span><span class="t r" style="left:944px;top:17px;font-size:14px;line-height:18px;letter-spacing:-0.199px;">Oct 1, 2016</span>
<span class="t r" style="left:1067.9px;top:17px;font-size:14px;line-height:18px;letter-spacing:-0.258px;">100.000%</span><span class="st c" style="width:75px"><span class="t m" style="left:7px;top:3px;font-size:12px;line-height:16px;letter-spacing:0.041px;color:#128a3c;">Completed</span></span><svg class="abs" style="left:1296.00px;top:26.20px;width:1px;height:1px;overflow:visible"><path d="M-5.800 -5.800L5.800 5.800M5.800 -5.800L-5.800 5.800" fill="none" stroke="#b80f0f" stroke-width="2.700"/></svg><svg class="abs" style="left:1421.00px;top:26.00px;width:1px;height:1px;overflow:visible"><path d="M-6 -0.300L-2.500 3.500L6 -4.200" fill="none" stroke="#0b7a34" stroke-width="2.600"/></svg><span class="t r" style="left:1504px;top:17px;font-size:14px;line-height:18px;letter-spacing:-0.199px;">Oct 1, 2016</span><svg class="abs" style="left:1649.4px;top:20.2px;width:3.200px;height:11.600px" viewBox="0 0 3.200 11.600" fill="#2f7de1"><circle cx="1.600" cy="1.600" r="1.550"/><circle cx="1.600" cy="5.800" r="1.550"/><circle cx="1.600" cy="10" r="1.550"/></svg></div>
<div class="row" style="top:636px"><div class="cb"></div><span class="t" style="left:52px;top:17px;font-size:14px;line-height:18px;letter-spacing:0.288px;font-weight:bold;">114011</span>
<div class="av" style="left:153px">NK</div><span class="t" style="left:194px;top:6px;font-size:14px;line-height:18px;letter-spacing:-0.381px;font-weight:bold;">Natallya Kramko</span><span class="t r" style="left:194px;top:28.5px;font-size:12px;line-height:16px;letter-spacing:0.291px;color:#555;">114001</span>
<div class="av" style="left:345px">JS</div><span class="t" style="left:386px;top:6px;font-size:14px;line-height:18px;letter-spacing:-0.433px;font-weight:bold;">John Smith</span><span class="t r" style="left:386px;top:28.5px;font-size:12px;line-height:16px;letter-spacing:0.291px;color:#555;">114002</span>
<span class="t r" style="left:537px;top:17px;font-size:14px;line-height:18px;letter-spacing:-0.108px;">One question</span><span class="t r" style="left:770px;top:17px;font-size:14px;line-height:18px;letter-spacing:-0.256px;">1.0</span><span class="t r" style="left:809px;top:17px;font-size:14px;line-height:18px;letter-spacing:-0.199px;">Oct 1, 2016</span><span class="t r" style="left:944px;top:17px;font-size:14px;line-height:18px;letter-spacing:-0.199px;">Oct 1, 2016</span>
<span class="t r" style="left:1067.9px;top:17px;font-size:14px;line-height:18px;letter-spacing:-0.258px;">100.000%</span><span class="st c" style="width:75px"><span class="t m" style="left:7px;top:3px;font-size:12px;line-height:16px;letter-spacing:0.041px;color:#128a3c;">Completed</span></span><svg class="abs" style="left:1296.00px;top:26.00px;width:1px;height:1px;overflow:visible"><path d="M-6 -0.300L-2.500 3.500L6 -4.200" fill="none" stroke="#0b7a34" stroke-width="2.600"/></svg><svg class="abs" style="left:1421.00px;top:26.00px;width:1px;height:1px;overflow:visible"><path d="M-6 -0.300L-2.500 3.500L6 -4.200" fill="none" stroke="#0b7a34" stroke-width="2.600"/></svg><span class="t r" style="left:1504px;top:17px;font-size:14px;line-height:18px;letter-spacing:-0.199px;">Oct 1, 2016</span><svg class="abs" style="left:1649.4px;top:20.2px;width:3.200px;height:11.600px" viewBox="0 0 3.200 11.600" fill="#2f7de1"><circle cx="1.600" cy="1.600" r="1.550"/><circle cx="1.600" cy="5.800" r="1.550"/><circle cx="1.600" cy="10" r="1.550"/></svg></div>
</div>
<div class="abs" style="left:1677px;top:212px;width:6px;height:346px;background:#2f80ed;border-radius:3px 0 0 3px"></div>
<div class="foot">
 <div class="abs" style="left:16px;top:20px;width:180px;height:36px;border:1px solid #c4c4c4;border-radius:7px"></div>
 <div class="abs" style="left:21px;top:12px;width:90px;height:15px;background:#fff"></div>
 <span class="t r" style="left:26px;top:11.5px;font-size:12px;line-height:16px;letter-spacing:0.032px;color:#555;">Items per page</span>
 <span class="t" style="left:27px;top:29px;font-size:14px;line-height:18px;letter-spacing:0px;font-weight:bold;">25</span>
 <svg class="abs" style="left:171px;top:34px;width:14px;height:9px" viewBox="0 0 14 9"><path d="M1.300 1.300L7 7L12.700 1.300" fill="none" stroke="#8a8a8a" stroke-width="2.300"/></svg>
 <svg class="abs" style="left:219.500px;top:31.500px;width:9px;height:14px" viewBox="0 0 9 14"><path d="M7.700 1.300L2 7L7.700 12.700" fill="none" stroke="#a9c8f5" stroke-width="2.500"/></svg>
 <div class="abs" style="left:252px;top:20px;width:36px;height:36px;background:#000;border-radius:7px"></div>
 <span class="t" style="left:266px;top:28px;font-size:14px;line-height:18px;letter-spacing:0px;font-weight:bold;color:#fff;">1</span>
 <svg class="abs" style="left:311px;top:31.500px;width:9px;height:14px" viewBox="0 0 9 14"><path d="M1.300 1.300L7 7L1.300 12.700" fill="none" stroke="#7fb0f3" stroke-width="2.500"/></svg>
 <span class="t r" style="left:344.4px;top:28px;font-size:14px;line-height:18px;letter-spacing:0.245px;">1–24 / 24</span>
</div>

<div class="menu" style="left:11px;top:165px;width:217px;height:277px"></div>
<svg class="abs" style="left:43.00px;top:194.50px;width:1px;height:1px;overflow:visible"><path fill="#565a5c" d="M-0.600 -4.500V1H4.900A5.500 5.500 0 1 1 -0.600 -4.500z"/><path fill="#565a5c" d="M1.100 -6.250A5.500 5.500 0 0 1 6.600 -0.750H1.100z"/></svg><span class="t m" style="left:60.5px;top:185.0px;font-size:14px;line-height:18px;letter-spacing:0.053px;color:#111;">View overview(s)</span><svg class="abs" style="left:43.00px;top:225.50px;width:1px;height:1px;overflow:visible"><g transform="translate(0,0.400)"><path d="M5.660 0.300A5.670 5.670 0 1 1 3.640 -4.340" fill="none" stroke="#bdbdbd" stroke-width="1.350"/><path fill="#bdbdbd" d="M5.820 -6.450V-2.050L1.260 -2.360z"/></g></svg><span class="t m" style="left:60.5px;top:216.0px;font-size:14px;line-height:18px;letter-spacing:-0.358px;color:#b3b3b3;">Reopen</span><svg class="abs" style="left:43.00px;top:256.50px;width:1px;height:1px;overflow:visible"><g transform="translate(0.060,0.350)"><path d="M0.540 -6.180A6.200 6.200 0 0 0 -3.820 4.890M-0.430 6.180A6.200 6.200 0 0 0 3.820 -4.890" fill="none" stroke="#565a5c" stroke-width="1.350"/><path fill="#565a5c" d="M-5.700 6.100H-2V2.700zM1.700 -5.900H5.700L1.900 -2.900z"/><circle cx="-0.160" cy="-1.950" r="1.300" fill="#565a5c"/><path fill="#565a5c" d="M-3.100 2.200V1.200C-3.100 0.100 -1.200 -0.100 -0.150 -0.100S2.800 0.100 2.800 1.200V2.200z"/></g></svg><span class="t m" style="left:60.5px;top:247.0px;font-size:14px;line-height:18px;letter-spacing:-0.124px;color:#111;">Change reviewer...</span><svg class="abs" style="left:43.00px;top:287.50px;width:1px;height:1px;overflow:visible"><path d="M-5.800 0.300L-2 3.900L5.800 -4.200" fill="none" stroke="#bdbdbd" stroke-width="2.200"/></svg><span class="t m" style="left:60.5px;top:278.0px;font-size:14px;line-height:18px;letter-spacing:0.1px;color:#b3b3b3;">Include in reports</span><svg class="abs" style="left:43.00px;top:318.50px;width:1px;height:1px;overflow:visible"><path d="M-5.900 -5.900L5.900 5.900M5.900 -5.900L-5.900 5.900" fill="none" stroke="#565a5c" stroke-width="2.100"/></svg><span class="t m" style="left:60.5px;top:309.0px;font-size:14px;line-height:18px;letter-spacing:0.076px;color:#111;">Exclude from reports</span><svg class="abs" style="left:43.00px;top:349.50px;width:1px;height:1px;overflow:visible"><path d="M-5.800 0.300L-2 3.900L5.800 -4.200" fill="none" stroke="#565a5c" stroke-width="2.200"/></svg><span class="t m" style="left:60.5px;top:340.0px;font-size:14px;line-height:18px;letter-spacing:-0.031px;color:#111;">Reveal results to agent</span><svg class="abs" style="left:43.00px;top:380.50px;width:1px;height:1px;overflow:visible"><path d="M-5.900 -5.900L5.900 5.900M5.900 -5.900L-5.900 5.900" fill="none" stroke="#bdbdbd" stroke-width="2.100"/></svg><span class="t m" style="left:60.5px;top:371.0px;font-size:14px;line-height:18px;letter-spacing:0.092px;color:#b3b3b3;">Hide results for agent</span><svg class="abs" style="left:43.00px;top:411.50px;width:1px;height:1px;overflow:visible"><path fill="#565a5c" transform="translate(-5.500,-6.900)" d="M0 1.300H3L3.700 0H7.300L8 1.300H11V3H0zM0.900 4H10.100V11.800A1.400 1.400 0 0 1 8.700 13.200H2.300A1.400 1.400 0 0 1 0.900 11.800z"/></svg><span class="t m" style="left:60.5px;top:402.0px;font-size:14px;line-height:18px;letter-spacing:-0.128px;color:#111;">Delete</span>
<div class="menu" style="left:1390px;top:165px;width:278px;height:193px"></div>
<div class="abs" style="left:1405px;top:180px;width:248px;height:30px;background:#c5e1ee;border:2px solid #63c9fb;border-radius:7px"></div>
<span class="t" style="left:1415.6px;top:184.7px;font-size:14px;line-height:18px;letter-spacing:-0.504px;font-weight:bold;">Agent score view</span>
<span class="t r" style="left:1415.6px;top:215.7px;font-size:14px;line-height:18px;letter-spacing:-0.109px;">Reviewer score view</span>
<div class="abs" style="left:1415px;top:246px;width:228px;height:1px;background:#dcdcdc"></div>
<span class="t r" style="left:1415.6px;top:256.7px;font-size:14px;line-height:18px;letter-spacing:-0.199px;">Exact Scores</span>
<span class="t r" style="left:1415.6px;top:287.7px;font-size:14px;line-height:18px;letter-spacing:-0.207px;">No Scores</span>
<span class="t r" style="left:1415.6px;top:318.7px;font-size:14px;line-height:18px;letter-spacing:-0.143px;">Color Scores</span>
<div class="menu" style="left:1446px;top:516px;width:218px;height:308px"></div>
<svg class="abs" style="left:1478.00px;top:545.50px;width:1px;height:1px;overflow:visible"><g transform="rotate(-45)" fill="#565a5c"><path d="M-8.900 0L-6.200 -1.850V1.850z"/><rect x="-5.200" y="-2.450" width="8.400" height="4.900"/><rect x="3.900" y="-2.150" width="3.350" height="4.300" rx="0.900"/></g></svg><span class="t m" style="left:1495.5px;top:536.0px;font-size:14px;line-height:18px;letter-spacing:-0.083px;color:#111;">Detail</span><svg class="abs" style="left:1478.00px;top:576.50px;width:1px;height:1px;overflow:visible"><path fill="#565a5c" d="M-0.600 -4.500V1H4.900A5.500 5.500 0 1 1 -0.600 -4.500z"/><path fill="#565a5c" d="M1.100 -6.250A5.500 5.500 0 0 1 6.600 -0.750H1.100z"/></svg><span class="t m" style="left:1495.5px;top:567.0px;font-size:14px;line-height:18px;letter-spacing:-0.033px;color:#111;">View overview</span><svg class="abs" style="left:1478.00px;top:607.50px;width:1px;height:1px;overflow:visible"><g transform="translate(0,0.400)"><path d="M5.660 0.300A5.670 5.670 0 1 1 3.640 -4.340" fill="none" stroke="#565a5c" stroke-width="1.350"/><path fill="#565a5c" d="M5.820 -6.450V-2.050L1.260 -2.360z"/></g></svg><span class="t m" style="left:1495.5px;top:598.0px;font-size:14px;line-height:18px;letter-spacing:-0.358px;color:#111;">Reopen</span><svg class="abs" style="left:1478.00px;top:638.50px;width:1px;height:1px;overflow:visible"><g transform="translate(0.060,0.350)"><path d="M0.540 -6.180A6.200 6.200 0 0 0 -3.820 4.890M-0.430 6.180A6.200 6.200 0 0 0 3.820 -4.890" fill="none" stroke="#bdbdbd" stroke-width="1.350"/><path fill="#bdbdbd" d="M-5.700 6.100H-2V2.700zM1.700 -5.900H5.700L1.900 -2.900z"/><circle cx="-0.160" cy="-1.950" r="1.300" fill="#bdbdbd"/><path fill="#bdbdbd" d="M-3.100 2.200V1.200C-3.100 0.100 -1.200 -0.100 -0.150 -0.100S2.800 0.100 2.800 1.200V2.200z"/></g></svg><span class="t m" style="left:1495.5px;top:629.0px;font-size:14px;line-height:18px;letter-spacing:-0.124px;color:#b3b3b3;">Change reviewer...</span><svg class="abs" style="left:1478.00px;top:669.50px;width:1px;height:1px;overflow:visible"><path d="M-5.800 0.300L-2 3.900L5.800 -4.200" fill="none" stroke="#bdbdbd" stroke-width="2.200"/></svg><span class="t m" style="left:1495.5px;top:660.0px;font-size:14px;line-height:18px;letter-spacing:0.1px;color:#b3b3b3;">Include in reports</span><svg class="abs" style="left:1478.00px;top:700.50px;width:1px;height:1px;overflow:visible"><path d="M-5.900 -5.900L5.900 5.900M5.900 -5.900L-5.900 5.900" fill="none" stroke="#565a5c" stroke-width="2.100"/></svg><span class="t m" style="left:1495.5px;top:691.0px;font-size:14px;line-height:18px;letter-spacing:0.076px;color:#111;">Exclude from reports</span><svg class="abs" style="left:1478.00px;top:731.50px;width:1px;height:1px;overflow:visible"><path d="M-5.800 0.300L-2 3.900L5.800 -4.200" fill="none" stroke="#565a5c" stroke-width="2.200"/></svg><span class="t m" style="left:1495.5px;top:722.0px;font-size:14px;line-height:18px;letter-spacing:-0.031px;color:#111;">Reveal results to agent</span><svg class="abs" style="left:1478.00px;top:762.50px;width:1px;height:1px;overflow:visible"><path d="M-5.900 -5.900L5.900 5.900M5.900 -5.900L-5.900 5.900" fill="none" stroke="#bdbdbd" stroke-width="2.100"/></svg><span class="t m" style="left:1495.5px;top:753.0px;font-size:14px;line-height:18px;letter-spacing:0.092px;color:#b3b3b3;">Hide results for agent</span><svg class="abs" style="left:1478.00px;top:793.50px;width:1px;height:1px;overflow:visible"><path fill="#565a5c" transform="translate(-5.500,-6.900)" d="M0 1.300H3L3.700 0H7.300L8 1.300H11V3H0zM0.900 4H10.100V11.800A1.400 1.400 0 0 1 8.700 13.200H2.300A1.400 1.400 0 0 1 0.900 11.800z"/></svg><span class="t m" style="left:1495.5px;top:784.0px;font-size:14px;line-height:18px;letter-spacing:-0.128px;color:#111;">Delete</span>

<svg class="abs" style="left:1675px;top:945px;width:8px;height:8px" viewBox="0 0 8 8"><path d="M8 1.500A6.500 6.500 0 0 1 1.500 8H8z" fill="#e4e4e4"/></svg>
<div class="grect" style="left:0;top:114px;width:225px;height:320px"></div>
<div class="grect" style="left:1385px;top:112px;width:279px;height:248px"></div>
<div class="grect" style="left:1441px;top:484px;width:229px;height:339px"></div>
<div class="gcirc" style="left:145.700px;top:107.200px">1</div>
<div class="gcirc" style="left:1569.800px;top:118.100px">2</div>
<div class="gcirc" style="left:1570.500px;top:491.800px">3</div>
<svg class="abs" style="left:110.9px;top:137.4px;width:20px;height:26px;overflow:visible" viewBox="-1 -1 20 26"><path d="M5.400 1.600C5.400 -0.300 8.300 -0.300 8.300 1.600V6.400C8.300 5.100 11.300 5.100 11.300 6.700C11.300 5.500 14.300 5.500 14.300 7.100C14.300 6.100 17.400 6.100 17.400 8V16C17.400 20 14.500 23 10.500 23C7.500 23 6 21.500 4.600 19.500L0.600 14.400C-0.300 13.100 0.900 11.700 2.300 12.500L5.400 14.300Z" fill="#fff" stroke="#12122a" stroke-width="1.250" stroke-linejoin="round"/><path d="M8.300 6.400V10.300M11.300 6.900V10.300M14.300 7.300V10.300" stroke="#12122a" stroke-width="1.100" fill="none"/></svg>
<svg class="abs" style="left:1642.3px;top:148.2px;width:20px;height:26px;overflow:visible" viewBox="-1 -1 20 26"><path d="M5.400 1.600C5.400 -0.300 8.300 -0.300 8.300 1.600V6.400C8.300 5.100 11.300 5.100 11.300 6.700C11.300 5.500 14.300 5.500 14.300 7.100C14.300 6.100 17.400 6.100 17.400 8V16C17.400 20 14.500 23 10.500 23C7.500 23 6 21.500 4.600 19.500L0.600 14.400C-0.300 13.100 0.900 11.700 2.300 12.500L5.400 14.300Z" fill="#fff" stroke="#12122a" stroke-width="1.250" stroke-linejoin="round"/><path d="M8.300 6.400V10.300M11.300 6.900V10.300M14.300 7.300V10.300" stroke="#12122a" stroke-width="1.100" fill="none"/></svg>
<svg class="abs" style="left:1646.2px;top:505.8px;width:20px;height:26px;overflow:visible" viewBox="-1 -1 20 26"><path d="M5.400 1.600C5.400 -0.300 8.300 -0.300 8.300 1.600V6.400C8.300 5.100 11.300 5.100 11.300 6.700C11.300 5.500 14.300 5.500 14.300 7.100C14.300 6.100 17.400 6.100 17.400 8V16C17.400 20 14.500 23 10.500 23C7.500 23 6 21.500 4.600 19.500L0.600 14.400C-0.300 13.100 0.900 11.700 2.300 12.500L5.400 14.300Z" fill="#fff" stroke="#12122a" stroke-width="1.250" stroke-linejoin="round"/><path d="M8.300 6.400V10.300M11.300 6.900V10.300M14.300 7.300V10.300" stroke="#12122a" stroke-width="1.100" fill="none"/></svg>
</body></html>
